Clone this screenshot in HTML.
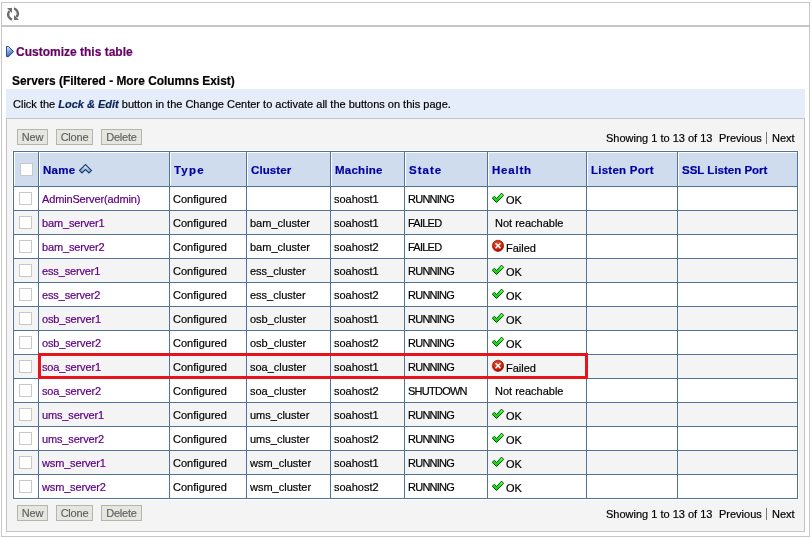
<!DOCTYPE html>
<html><head><meta charset="utf-8"><style>
html,body{margin:0;padding:0;width:812px;height:538px;overflow:hidden;background:#fff}
body{position:relative;font-family:"Liberation Sans",sans-serif;font-size:11px;color:#000}
body>div,body>svg{position:absolute}
.t{position:absolute;white-space:nowrap;line-height:13px;will-change:transform;-webkit-text-stroke:0.2px}
.btn{position:absolute;will-change:transform;box-sizing:border-box;border:1px solid #b5b5ae;background:#e6e6e0;color:#5e5e5e;text-align:center;line-height:14px;font-size:11px;-webkit-text-stroke:0.15px;letter-spacing:-0.2px}
svg{display:block}
</style></head><body>
<div style="left:1px;top:2px;width:809px;height:535px;border:1px solid #c6c6c6;box-sizing:border-box;background:#fff"></div>
<div style="left:1px;top:25px;width:809px;height:2px;background:#c6c6c6"></div>
<svg style="position:absolute;left:6px;top:7px" width="14" height="14" viewBox="0 0 14 14"><path d="M1 1 H6 V6 Z" fill="#6e6e6e"/><path d="M3.6 4 Q0.4 7.6 3.8 11.2 Q4.8 12.2 6 12.7" fill="none" stroke="#6e6e6e" stroke-width="2.4"/><path d="M13 13 H8 V8 Z" fill="#6e6e6e"/><path d="M10.4 10 Q13.6 6.4 10.2 2.8 Q9.2 1.8 8 1.3" fill="none" stroke="#6e6e6e" stroke-width="2.4"/></svg>
<svg style="position:absolute;left:5px;top:45px" width="11" height="14" viewBox="0 0 11 14"><defs><linearGradient id="tg" x1="0" y1="0" x2="0.3" y2="1"><stop offset="0" stop-color="#e8f0ff"/><stop offset="0.4" stop-color="#9ab6e6"/><stop offset="1" stop-color="#3f66b0"/></linearGradient></defs><path d="M1.5 12.5 L3.5 12.5 L8.5 7.5 L3.5 2.5" fill="none" stroke="#d8d8d8" stroke-width="1" opacity="0.6"/><path d="M1.5 1.5 L3.5 1.5 L8.5 6.5 L3.5 11.5 L1.5 11.5 Z" fill="url(#tg)" stroke="#2a4c90" stroke-width="1" stroke-linejoin="round"/></svg>
<div class="t" style="left:16px;top:46px;font-weight:bold;color:#660066;font-size:12px">Customize this table</div>
<div class="t" style="left:12px;top:75px;font-weight:bold;color:#000;font-size:11.9px">Servers (Filtered - More Columns Exist)</div>
<div style="left:6px;top:89px;width:799px;height:29px;background:#e6edfa"></div>
<div class="t" style="left:13px;top:98px;color:#000">Click the <b><i style="color:#0c2456">Lock &amp; Edit</i></b> button in the Change Center to activate all the buttons on this page.</div>
<div style="left:6px;top:118px;width:799px;height:414px;background:#f4f4f4;border:1px solid #c4c4c4;box-sizing:border-box"></div>
<div class="btn" style="left:17px;top:129px;width:31px;height:16px">New</div>
<div class="btn" style="left:56px;top:129px;width:37px;height:16px">Clone</div>
<div class="btn" style="left:101px;top:129px;width:41px;height:16px">Delete</div>
<div class="t" style="left:606px;top:132px;color:#000">Showing 1 to 13 of 13</div>
<div class="t" style="left:719px;top:132px;color:#000">Previous</div>
<div style="left:766px;top:132px;width:1px;height:12px;background:#777"></div>
<div class="t" style="left:772px;top:132px;color:#000">Next</div>
<div class="btn" style="left:17px;top:505px;width:31px;height:16px">New</div>
<div class="btn" style="left:56px;top:505px;width:37px;height:16px">Clone</div>
<div class="btn" style="left:101px;top:505px;width:41px;height:16px">Delete</div>
<div class="t" style="left:606px;top:508px;color:#000">Showing 1 to 13 of 13</div>
<div class="t" style="left:719px;top:508px;color:#000">Previous</div>
<div style="left:766px;top:508px;width:1px;height:12px;background:#777"></div>
<div class="t" style="left:772px;top:508px;color:#000">Next</div>
<div style="left:12px;top:150px;width:787px;height:350px;background:#fff"></div>
<div style="left:13px;top:151px;width:785px;height:348px;background:#52729a"></div>
<div style="left:14px;top:152px;width:783px;height:34px;background:#fff"></div>
<div style="left:15px;top:153px;width:23px;height:33px;background:#cfdcee"></div>
<div style="left:40px;top:153px;width:129px;height:33px;background:#cfdcee"></div>
<div style="left:171px;top:153px;width:75px;height:33px;background:#cfdcee"></div>
<div style="left:248px;top:153px;width:82px;height:33px;background:#cfdcee"></div>
<div style="left:332px;top:153px;width:72px;height:33px;background:#cfdcee"></div>
<div style="left:406px;top:153px;width:81px;height:33px;background:#cfdcee"></div>
<div style="left:489px;top:153px;width:97px;height:33px;background:#cfdcee"></div>
<div style="left:588px;top:153px;width:89px;height:33px;background:#cfdcee"></div>
<div style="left:679px;top:153px;width:118px;height:33px;background:#cfdcee"></div>
<div style="left:38px;top:151px;width:1px;height:347px;background:#52729a"></div>
<div style="left:169px;top:151px;width:1px;height:347px;background:#52729a"></div>
<div style="left:246px;top:151px;width:1px;height:347px;background:#52729a"></div>
<div style="left:330px;top:151px;width:1px;height:347px;background:#52729a"></div>
<div style="left:404px;top:151px;width:1px;height:347px;background:#52729a"></div>
<div style="left:487px;top:151px;width:1px;height:347px;background:#52729a"></div>
<div style="left:586px;top:151px;width:1px;height:347px;background:#52729a"></div>
<div style="left:677px;top:151px;width:1px;height:347px;background:#52729a"></div>
<div style="left:14px;top:187px;width:24px;height:23px;background:#ffffff"></div>
<div style="left:39px;top:187px;width:130px;height:23px;background:#ffffff"></div>
<div style="left:170px;top:187px;width:76px;height:23px;background:#ffffff"></div>
<div style="left:247px;top:187px;width:83px;height:23px;background:#ffffff"></div>
<div style="left:331px;top:187px;width:73px;height:23px;background:#ffffff"></div>
<div style="left:405px;top:187px;width:82px;height:23px;background:#ffffff"></div>
<div style="left:488px;top:187px;width:98px;height:23px;background:#ffffff"></div>
<div style="left:587px;top:187px;width:90px;height:23px;background:#ffffff"></div>
<div style="left:678px;top:187px;width:119px;height:23px;background:#ffffff"></div>
<div style="left:14px;top:211px;width:24px;height:23px;background:#f4f4f4"></div>
<div style="left:39px;top:211px;width:130px;height:23px;background:#f4f4f4"></div>
<div style="left:170px;top:211px;width:76px;height:23px;background:#f4f4f4"></div>
<div style="left:247px;top:211px;width:83px;height:23px;background:#f4f4f4"></div>
<div style="left:331px;top:211px;width:73px;height:23px;background:#f4f4f4"></div>
<div style="left:405px;top:211px;width:82px;height:23px;background:#f4f4f4"></div>
<div style="left:488px;top:211px;width:98px;height:23px;background:#f4f4f4"></div>
<div style="left:587px;top:211px;width:90px;height:23px;background:#f4f4f4"></div>
<div style="left:678px;top:211px;width:119px;height:23px;background:#f4f4f4"></div>
<div style="left:14px;top:235px;width:24px;height:23px;background:#ffffff"></div>
<div style="left:39px;top:235px;width:130px;height:23px;background:#ffffff"></div>
<div style="left:170px;top:235px;width:76px;height:23px;background:#ffffff"></div>
<div style="left:247px;top:235px;width:83px;height:23px;background:#ffffff"></div>
<div style="left:331px;top:235px;width:73px;height:23px;background:#ffffff"></div>
<div style="left:405px;top:235px;width:82px;height:23px;background:#ffffff"></div>
<div style="left:488px;top:235px;width:98px;height:23px;background:#ffffff"></div>
<div style="left:587px;top:235px;width:90px;height:23px;background:#ffffff"></div>
<div style="left:678px;top:235px;width:119px;height:23px;background:#ffffff"></div>
<div style="left:14px;top:259px;width:24px;height:23px;background:#f4f4f4"></div>
<div style="left:39px;top:259px;width:130px;height:23px;background:#f4f4f4"></div>
<div style="left:170px;top:259px;width:76px;height:23px;background:#f4f4f4"></div>
<div style="left:247px;top:259px;width:83px;height:23px;background:#f4f4f4"></div>
<div style="left:331px;top:259px;width:73px;height:23px;background:#f4f4f4"></div>
<div style="left:405px;top:259px;width:82px;height:23px;background:#f4f4f4"></div>
<div style="left:488px;top:259px;width:98px;height:23px;background:#f4f4f4"></div>
<div style="left:587px;top:259px;width:90px;height:23px;background:#f4f4f4"></div>
<div style="left:678px;top:259px;width:119px;height:23px;background:#f4f4f4"></div>
<div style="left:14px;top:283px;width:24px;height:23px;background:#ffffff"></div>
<div style="left:39px;top:283px;width:130px;height:23px;background:#ffffff"></div>
<div style="left:170px;top:283px;width:76px;height:23px;background:#ffffff"></div>
<div style="left:247px;top:283px;width:83px;height:23px;background:#ffffff"></div>
<div style="left:331px;top:283px;width:73px;height:23px;background:#ffffff"></div>
<div style="left:405px;top:283px;width:82px;height:23px;background:#ffffff"></div>
<div style="left:488px;top:283px;width:98px;height:23px;background:#ffffff"></div>
<div style="left:587px;top:283px;width:90px;height:23px;background:#ffffff"></div>
<div style="left:678px;top:283px;width:119px;height:23px;background:#ffffff"></div>
<div style="left:14px;top:307px;width:24px;height:23px;background:#f4f4f4"></div>
<div style="left:39px;top:307px;width:130px;height:23px;background:#f4f4f4"></div>
<div style="left:170px;top:307px;width:76px;height:23px;background:#f4f4f4"></div>
<div style="left:247px;top:307px;width:83px;height:23px;background:#f4f4f4"></div>
<div style="left:331px;top:307px;width:73px;height:23px;background:#f4f4f4"></div>
<div style="left:405px;top:307px;width:82px;height:23px;background:#f4f4f4"></div>
<div style="left:488px;top:307px;width:98px;height:23px;background:#f4f4f4"></div>
<div style="left:587px;top:307px;width:90px;height:23px;background:#f4f4f4"></div>
<div style="left:678px;top:307px;width:119px;height:23px;background:#f4f4f4"></div>
<div style="left:14px;top:331px;width:24px;height:23px;background:#ffffff"></div>
<div style="left:39px;top:331px;width:130px;height:23px;background:#ffffff"></div>
<div style="left:170px;top:331px;width:76px;height:23px;background:#ffffff"></div>
<div style="left:247px;top:331px;width:83px;height:23px;background:#ffffff"></div>
<div style="left:331px;top:331px;width:73px;height:23px;background:#ffffff"></div>
<div style="left:405px;top:331px;width:82px;height:23px;background:#ffffff"></div>
<div style="left:488px;top:331px;width:98px;height:23px;background:#ffffff"></div>
<div style="left:587px;top:331px;width:90px;height:23px;background:#ffffff"></div>
<div style="left:678px;top:331px;width:119px;height:23px;background:#ffffff"></div>
<div style="left:14px;top:355px;width:24px;height:23px;background:#f4f4f4"></div>
<div style="left:39px;top:355px;width:130px;height:23px;background:#f4f4f4"></div>
<div style="left:170px;top:355px;width:76px;height:23px;background:#f4f4f4"></div>
<div style="left:247px;top:355px;width:83px;height:23px;background:#f4f4f4"></div>
<div style="left:331px;top:355px;width:73px;height:23px;background:#f4f4f4"></div>
<div style="left:405px;top:355px;width:82px;height:23px;background:#f4f4f4"></div>
<div style="left:488px;top:355px;width:98px;height:23px;background:#f4f4f4"></div>
<div style="left:587px;top:355px;width:90px;height:23px;background:#f4f4f4"></div>
<div style="left:678px;top:355px;width:119px;height:23px;background:#f4f4f4"></div>
<div style="left:14px;top:379px;width:24px;height:23px;background:#ffffff"></div>
<div style="left:39px;top:379px;width:130px;height:23px;background:#ffffff"></div>
<div style="left:170px;top:379px;width:76px;height:23px;background:#ffffff"></div>
<div style="left:247px;top:379px;width:83px;height:23px;background:#ffffff"></div>
<div style="left:331px;top:379px;width:73px;height:23px;background:#ffffff"></div>
<div style="left:405px;top:379px;width:82px;height:23px;background:#ffffff"></div>
<div style="left:488px;top:379px;width:98px;height:23px;background:#ffffff"></div>
<div style="left:587px;top:379px;width:90px;height:23px;background:#ffffff"></div>
<div style="left:678px;top:379px;width:119px;height:23px;background:#ffffff"></div>
<div style="left:14px;top:403px;width:24px;height:23px;background:#f4f4f4"></div>
<div style="left:39px;top:403px;width:130px;height:23px;background:#f4f4f4"></div>
<div style="left:170px;top:403px;width:76px;height:23px;background:#f4f4f4"></div>
<div style="left:247px;top:403px;width:83px;height:23px;background:#f4f4f4"></div>
<div style="left:331px;top:403px;width:73px;height:23px;background:#f4f4f4"></div>
<div style="left:405px;top:403px;width:82px;height:23px;background:#f4f4f4"></div>
<div style="left:488px;top:403px;width:98px;height:23px;background:#f4f4f4"></div>
<div style="left:587px;top:403px;width:90px;height:23px;background:#f4f4f4"></div>
<div style="left:678px;top:403px;width:119px;height:23px;background:#f4f4f4"></div>
<div style="left:14px;top:427px;width:24px;height:23px;background:#ffffff"></div>
<div style="left:39px;top:427px;width:130px;height:23px;background:#ffffff"></div>
<div style="left:170px;top:427px;width:76px;height:23px;background:#ffffff"></div>
<div style="left:247px;top:427px;width:83px;height:23px;background:#ffffff"></div>
<div style="left:331px;top:427px;width:73px;height:23px;background:#ffffff"></div>
<div style="left:405px;top:427px;width:82px;height:23px;background:#ffffff"></div>
<div style="left:488px;top:427px;width:98px;height:23px;background:#ffffff"></div>
<div style="left:587px;top:427px;width:90px;height:23px;background:#ffffff"></div>
<div style="left:678px;top:427px;width:119px;height:23px;background:#ffffff"></div>
<div style="left:14px;top:451px;width:24px;height:23px;background:#f4f4f4"></div>
<div style="left:39px;top:451px;width:130px;height:23px;background:#f4f4f4"></div>
<div style="left:170px;top:451px;width:76px;height:23px;background:#f4f4f4"></div>
<div style="left:247px;top:451px;width:83px;height:23px;background:#f4f4f4"></div>
<div style="left:331px;top:451px;width:73px;height:23px;background:#f4f4f4"></div>
<div style="left:405px;top:451px;width:82px;height:23px;background:#f4f4f4"></div>
<div style="left:488px;top:451px;width:98px;height:23px;background:#f4f4f4"></div>
<div style="left:587px;top:451px;width:90px;height:23px;background:#f4f4f4"></div>
<div style="left:678px;top:451px;width:119px;height:23px;background:#f4f4f4"></div>
<div style="left:14px;top:475px;width:24px;height:23px;background:#ffffff"></div>
<div style="left:39px;top:475px;width:130px;height:23px;background:#ffffff"></div>
<div style="left:170px;top:475px;width:76px;height:23px;background:#ffffff"></div>
<div style="left:247px;top:475px;width:83px;height:23px;background:#ffffff"></div>
<div style="left:331px;top:475px;width:73px;height:23px;background:#ffffff"></div>
<div style="left:405px;top:475px;width:82px;height:23px;background:#ffffff"></div>
<div style="left:488px;top:475px;width:98px;height:23px;background:#ffffff"></div>
<div style="left:587px;top:475px;width:90px;height:23px;background:#ffffff"></div>
<div style="left:678px;top:475px;width:119px;height:23px;background:#ffffff"></div>
<div class="t" style="left:43px;top:164px;font-weight:bold;color:#0000a0;font-size:11.5px;letter-spacing:0.3px">Name</div>
<div class="t" style="left:174px;top:164px;font-weight:bold;color:#0000a0;font-size:11.5px;letter-spacing:1.2px">Type</div>
<div class="t" style="left:251px;top:164px;font-weight:bold;color:#0000a0;font-size:11.5px;letter-spacing:0.1px">Cluster</div>
<div class="t" style="left:335px;top:164px;font-weight:bold;color:#0000a0;font-size:11.5px;letter-spacing:0.25px">Machine</div>
<div class="t" style="left:409px;top:164px;font-weight:bold;color:#0000a0;font-size:11.5px;letter-spacing:1.0px">State</div>
<div class="t" style="left:492px;top:164px;font-weight:bold;color:#0000a0;font-size:11.5px;letter-spacing:0.8px">Health</div>
<div class="t" style="left:591px;top:164px;font-weight:bold;color:#0000a0;font-size:11.5px;letter-spacing:0.25px">Listen Port</div>
<div class="t" style="left:682px;top:164px;font-weight:bold;color:#0000a0;font-size:11.5px;letter-spacing:0px">SSL Listen Port</div>
<div style="left:20px;top:163px;width:13px;height:13px;background:#fff;border:1px solid #c8c8c8;box-sizing:border-box"></div>
<svg style="position:absolute;left:78px;top:163px" width="15" height="11" viewBox="0 0 15 11"><defs><linearGradient id="sg" x1="0" y1="0" x2="0" y2="1"><stop offset="0" stop-color="#ffffff"/><stop offset="1" stop-color="#6f90c0"/></linearGradient></defs><path d="M1.5 7.5 L7.5 1.5 L13.5 7.5 L11 10 L7.5 6.5 L4 10 Z" fill="url(#sg)" stroke="#1f3f78" stroke-width="1.1" stroke-linejoin="miter"/></svg>
<div style="left:19px;top:192px;width:13px;height:13px;background:#fff;border:1px solid #c8c8c8;box-sizing:border-box"></div>
<div class="t" style="left:42px;top:193px;color:#600084;letter-spacing:-0.15px">AdminServer(admin)</div>
<div class="t" style="left:173px;top:193px;">Configured</div>
<div class="t" style="left:334px;top:193px;">soahost1</div>
<div class="t" style="left:408px;top:193px;letter-spacing:-0.75px">RUNNING</div>
<div style="left:490px;top:190px;width:16px;height:16px"><svg width="16" height="16" viewBox="0 0 16 16"><defs><linearGradient id="cg" x1="0" y1="0" x2="0" y2="1"><stop offset="0" stop-color="#9af59a"/><stop offset="0.5" stop-color="#22e022"/><stop offset="1" stop-color="#10c010"/></linearGradient></defs><path d="M4.5 6.3 L6.5 8.5 L11.5 3.1 L13.7 5.4 L6.5 12.5 L2.2 8.3 Z" fill="url(#cg)" stroke="#005800" stroke-width="1" stroke-linejoin="round"/></svg></div>
<div class="t" style="left:506px;top:194px;">OK</div>
<div style="left:19px;top:216px;width:13px;height:13px;background:#fff;border:1px solid #c8c8c8;box-sizing:border-box"></div>
<div class="t" style="left:42px;top:217px;color:#600084;letter-spacing:-0.15px">bam_server1</div>
<div class="t" style="left:173px;top:217px;">Configured</div>
<div class="t" style="left:250px;top:217px;">bam_cluster</div>
<div class="t" style="left:334px;top:217px;">soahost1</div>
<div class="t" style="left:408px;top:217px;letter-spacing:-0.75px">FAILED</div>
<div class="t" style="left:495px;top:217px;">Not reachable</div>
<div style="left:19px;top:240px;width:13px;height:13px;background:#fff;border:1px solid #c8c8c8;box-sizing:border-box"></div>
<div class="t" style="left:42px;top:241px;color:#600084;letter-spacing:-0.15px">bam_server2</div>
<div class="t" style="left:173px;top:241px;">Configured</div>
<div class="t" style="left:250px;top:241px;">bam_cluster</div>
<div class="t" style="left:334px;top:241px;">soahost2</div>
<div class="t" style="left:408px;top:241px;letter-spacing:-0.75px">FAILED</div>
<div style="left:490px;top:238px;width:16px;height:16px"><svg width="16" height="16" viewBox="0 0 16 16"><defs><radialGradient id="xg" cx="0.45" cy="0.35" r="0.6"><stop offset="0" stop-color="#f04a2a"/><stop offset="0.7" stop-color="#d42410"/><stop offset="1" stop-color="#9a1200"/></radialGradient></defs><circle cx="8" cy="7.8" r="5.6" fill="url(#xg)" stroke="#8a1000" stroke-width="0.7"/><path d="M5.5 5.3 L10.5 10.3 M10.5 5.3 L5.5 10.3" stroke="#fff" stroke-width="1.5"/></svg></div>
<div class="t" style="left:506px;top:242px;">Failed</div>
<div style="left:19px;top:264px;width:13px;height:13px;background:#fff;border:1px solid #c8c8c8;box-sizing:border-box"></div>
<div class="t" style="left:42px;top:265px;color:#600084;letter-spacing:-0.15px">ess_server1</div>
<div class="t" style="left:173px;top:265px;">Configured</div>
<div class="t" style="left:250px;top:265px;">ess_cluster</div>
<div class="t" style="left:334px;top:265px;">soahost1</div>
<div class="t" style="left:408px;top:265px;letter-spacing:-0.75px">RUNNING</div>
<div style="left:490px;top:262px;width:16px;height:16px"><svg width="16" height="16" viewBox="0 0 16 16"><defs><linearGradient id="cg" x1="0" y1="0" x2="0" y2="1"><stop offset="0" stop-color="#9af59a"/><stop offset="0.5" stop-color="#22e022"/><stop offset="1" stop-color="#10c010"/></linearGradient></defs><path d="M4.5 6.3 L6.5 8.5 L11.5 3.1 L13.7 5.4 L6.5 12.5 L2.2 8.3 Z" fill="url(#cg)" stroke="#005800" stroke-width="1" stroke-linejoin="round"/></svg></div>
<div class="t" style="left:506px;top:266px;">OK</div>
<div style="left:19px;top:288px;width:13px;height:13px;background:#fff;border:1px solid #c8c8c8;box-sizing:border-box"></div>
<div class="t" style="left:42px;top:289px;color:#600084;letter-spacing:-0.15px">ess_server2</div>
<div class="t" style="left:173px;top:289px;">Configured</div>
<div class="t" style="left:250px;top:289px;">ess_cluster</div>
<div class="t" style="left:334px;top:289px;">soahost2</div>
<div class="t" style="left:408px;top:289px;letter-spacing:-0.75px">RUNNING</div>
<div style="left:490px;top:286px;width:16px;height:16px"><svg width="16" height="16" viewBox="0 0 16 16"><defs><linearGradient id="cg" x1="0" y1="0" x2="0" y2="1"><stop offset="0" stop-color="#9af59a"/><stop offset="0.5" stop-color="#22e022"/><stop offset="1" stop-color="#10c010"/></linearGradient></defs><path d="M4.5 6.3 L6.5 8.5 L11.5 3.1 L13.7 5.4 L6.5 12.5 L2.2 8.3 Z" fill="url(#cg)" stroke="#005800" stroke-width="1" stroke-linejoin="round"/></svg></div>
<div class="t" style="left:506px;top:290px;">OK</div>
<div style="left:19px;top:312px;width:13px;height:13px;background:#fff;border:1px solid #c8c8c8;box-sizing:border-box"></div>
<div class="t" style="left:42px;top:313px;color:#600084;letter-spacing:-0.15px">osb_server1</div>
<div class="t" style="left:173px;top:313px;">Configured</div>
<div class="t" style="left:250px;top:313px;">osb_cluster</div>
<div class="t" style="left:334px;top:313px;">soahost1</div>
<div class="t" style="left:408px;top:313px;letter-spacing:-0.75px">RUNNING</div>
<div style="left:490px;top:310px;width:16px;height:16px"><svg width="16" height="16" viewBox="0 0 16 16"><defs><linearGradient id="cg" x1="0" y1="0" x2="0" y2="1"><stop offset="0" stop-color="#9af59a"/><stop offset="0.5" stop-color="#22e022"/><stop offset="1" stop-color="#10c010"/></linearGradient></defs><path d="M4.5 6.3 L6.5 8.5 L11.5 3.1 L13.7 5.4 L6.5 12.5 L2.2 8.3 Z" fill="url(#cg)" stroke="#005800" stroke-width="1" stroke-linejoin="round"/></svg></div>
<div class="t" style="left:506px;top:314px;">OK</div>
<div style="left:19px;top:336px;width:13px;height:13px;background:#fff;border:1px solid #c8c8c8;box-sizing:border-box"></div>
<div class="t" style="left:42px;top:337px;color:#600084;letter-spacing:-0.15px">osb_server2</div>
<div class="t" style="left:173px;top:337px;">Configured</div>
<div class="t" style="left:250px;top:337px;">osb_cluster</div>
<div class="t" style="left:334px;top:337px;">soahost2</div>
<div class="t" style="left:408px;top:337px;letter-spacing:-0.75px">RUNNING</div>
<div style="left:490px;top:334px;width:16px;height:16px"><svg width="16" height="16" viewBox="0 0 16 16"><defs><linearGradient id="cg" x1="0" y1="0" x2="0" y2="1"><stop offset="0" stop-color="#9af59a"/><stop offset="0.5" stop-color="#22e022"/><stop offset="1" stop-color="#10c010"/></linearGradient></defs><path d="M4.5 6.3 L6.5 8.5 L11.5 3.1 L13.7 5.4 L6.5 12.5 L2.2 8.3 Z" fill="url(#cg)" stroke="#005800" stroke-width="1" stroke-linejoin="round"/></svg></div>
<div class="t" style="left:506px;top:338px;">OK</div>
<div style="left:19px;top:360px;width:13px;height:13px;background:#fff;border:1px solid #c8c8c8;box-sizing:border-box"></div>
<div class="t" style="left:42px;top:361px;color:#600084;letter-spacing:-0.15px">soa_server1</div>
<div class="t" style="left:173px;top:361px;">Configured</div>
<div class="t" style="left:250px;top:361px;">soa_cluster</div>
<div class="t" style="left:334px;top:361px;">soahost1</div>
<div class="t" style="left:408px;top:361px;letter-spacing:-0.75px">RUNNING</div>
<div style="left:490px;top:358px;width:16px;height:16px"><svg width="16" height="16" viewBox="0 0 16 16"><defs><radialGradient id="xg" cx="0.45" cy="0.35" r="0.6"><stop offset="0" stop-color="#f04a2a"/><stop offset="0.7" stop-color="#d42410"/><stop offset="1" stop-color="#9a1200"/></radialGradient></defs><circle cx="8" cy="7.8" r="5.6" fill="url(#xg)" stroke="#8a1000" stroke-width="0.7"/><path d="M5.5 5.3 L10.5 10.3 M10.5 5.3 L5.5 10.3" stroke="#fff" stroke-width="1.5"/></svg></div>
<div class="t" style="left:506px;top:362px;">Failed</div>
<div style="left:19px;top:384px;width:13px;height:13px;background:#fff;border:1px solid #c8c8c8;box-sizing:border-box"></div>
<div class="t" style="left:42px;top:385px;color:#600084;letter-spacing:-0.15px">soa_server2</div>
<div class="t" style="left:173px;top:385px;">Configured</div>
<div class="t" style="left:250px;top:385px;">soa_cluster</div>
<div class="t" style="left:334px;top:385px;">soahost2</div>
<div class="t" style="left:408px;top:385px;letter-spacing:-0.75px">SHUTDOWN</div>
<div class="t" style="left:495px;top:385px;">Not reachable</div>
<div style="left:19px;top:408px;width:13px;height:13px;background:#fff;border:1px solid #c8c8c8;box-sizing:border-box"></div>
<div class="t" style="left:42px;top:409px;color:#600084;letter-spacing:-0.15px">ums_server1</div>
<div class="t" style="left:173px;top:409px;">Configured</div>
<div class="t" style="left:250px;top:409px;">ums_cluster</div>
<div class="t" style="left:334px;top:409px;">soahost1</div>
<div class="t" style="left:408px;top:409px;letter-spacing:-0.75px">RUNNING</div>
<div style="left:490px;top:406px;width:16px;height:16px"><svg width="16" height="16" viewBox="0 0 16 16"><defs><linearGradient id="cg" x1="0" y1="0" x2="0" y2="1"><stop offset="0" stop-color="#9af59a"/><stop offset="0.5" stop-color="#22e022"/><stop offset="1" stop-color="#10c010"/></linearGradient></defs><path d="M4.5 6.3 L6.5 8.5 L11.5 3.1 L13.7 5.4 L6.5 12.5 L2.2 8.3 Z" fill="url(#cg)" stroke="#005800" stroke-width="1" stroke-linejoin="round"/></svg></div>
<div class="t" style="left:506px;top:410px;">OK</div>
<div style="left:19px;top:432px;width:13px;height:13px;background:#fff;border:1px solid #c8c8c8;box-sizing:border-box"></div>
<div class="t" style="left:42px;top:433px;color:#600084;letter-spacing:-0.15px">ums_server2</div>
<div class="t" style="left:173px;top:433px;">Configured</div>
<div class="t" style="left:250px;top:433px;">ums_cluster</div>
<div class="t" style="left:334px;top:433px;">soahost2</div>
<div class="t" style="left:408px;top:433px;letter-spacing:-0.75px">RUNNING</div>
<div style="left:490px;top:430px;width:16px;height:16px"><svg width="16" height="16" viewBox="0 0 16 16"><defs><linearGradient id="cg" x1="0" y1="0" x2="0" y2="1"><stop offset="0" stop-color="#9af59a"/><stop offset="0.5" stop-color="#22e022"/><stop offset="1" stop-color="#10c010"/></linearGradient></defs><path d="M4.5 6.3 L6.5 8.5 L11.5 3.1 L13.7 5.4 L6.5 12.5 L2.2 8.3 Z" fill="url(#cg)" stroke="#005800" stroke-width="1" stroke-linejoin="round"/></svg></div>
<div class="t" style="left:506px;top:434px;">OK</div>
<div style="left:19px;top:456px;width:13px;height:13px;background:#fff;border:1px solid #c8c8c8;box-sizing:border-box"></div>
<div class="t" style="left:42px;top:457px;color:#600084;letter-spacing:-0.15px">wsm_server1</div>
<div class="t" style="left:173px;top:457px;">Configured</div>
<div class="t" style="left:250px;top:457px;">wsm_cluster</div>
<div class="t" style="left:334px;top:457px;">soahost1</div>
<div class="t" style="left:408px;top:457px;letter-spacing:-0.75px">RUNNING</div>
<div style="left:490px;top:454px;width:16px;height:16px"><svg width="16" height="16" viewBox="0 0 16 16"><defs><linearGradient id="cg" x1="0" y1="0" x2="0" y2="1"><stop offset="0" stop-color="#9af59a"/><stop offset="0.5" stop-color="#22e022"/><stop offset="1" stop-color="#10c010"/></linearGradient></defs><path d="M4.5 6.3 L6.5 8.5 L11.5 3.1 L13.7 5.4 L6.5 12.5 L2.2 8.3 Z" fill="url(#cg)" stroke="#005800" stroke-width="1" stroke-linejoin="round"/></svg></div>
<div class="t" style="left:506px;top:458px;">OK</div>
<div style="left:19px;top:480px;width:13px;height:13px;background:#fff;border:1px solid #c8c8c8;box-sizing:border-box"></div>
<div class="t" style="left:42px;top:481px;color:#600084;letter-spacing:-0.15px">wsm_server2</div>
<div class="t" style="left:173px;top:481px;">Configured</div>
<div class="t" style="left:250px;top:481px;">wsm_cluster</div>
<div class="t" style="left:334px;top:481px;">soahost2</div>
<div class="t" style="left:408px;top:481px;letter-spacing:-0.75px">RUNNING</div>
<div style="left:490px;top:478px;width:16px;height:16px"><svg width="16" height="16" viewBox="0 0 16 16"><defs><linearGradient id="cg" x1="0" y1="0" x2="0" y2="1"><stop offset="0" stop-color="#9af59a"/><stop offset="0.5" stop-color="#22e022"/><stop offset="1" stop-color="#10c010"/></linearGradient></defs><path d="M4.5 6.3 L6.5 8.5 L11.5 3.1 L13.7 5.4 L6.5 12.5 L2.2 8.3 Z" fill="url(#cg)" stroke="#005800" stroke-width="1" stroke-linejoin="round"/></svg></div>
<div class="t" style="left:506px;top:482px;">OK</div>
<div style="left:38px;top:353px;width:550px;height:26px;border:3px solid #e8141c;box-sizing:border-box"></div>
</body></html>
